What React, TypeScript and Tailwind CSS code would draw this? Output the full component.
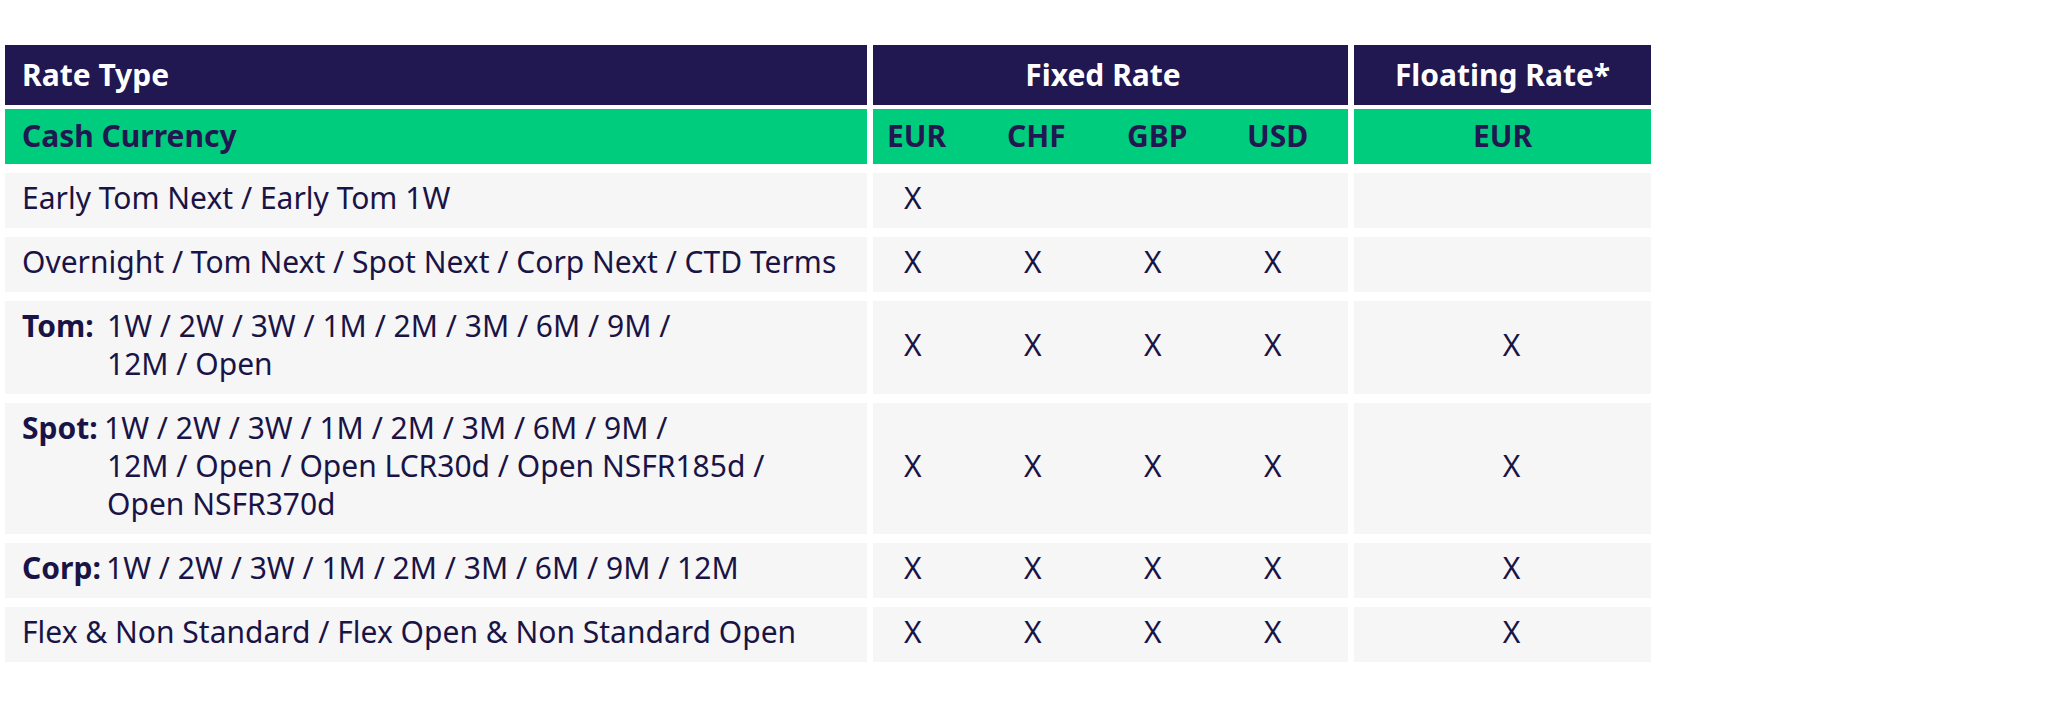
import React from "react";

const NAVY = "text-[#1a1446]";

type Row = {
  label?: string;
  labelW?: string;
  lines: string[];
  fixed: boolean[];
  floating: boolean;
  h: string;
};

const rows: Row[] = [
  { lines: ["Early Tom Next / Early Tom 1W"], fixed: [true, false, false, false], floating: false, h: "h-[55px]" },
  { lines: ["Overnight / Tom Next / Spot Next / Corp Next / CTD Terms"], fixed: [true, true, true, true], floating: false, h: "h-[55px]" },
  { label: "Tom:", labelW: "w-[85px]", lines: ["1W / 2W / 3W / 1M / 2M / 3M / 6M / 9M /", "12M / Open"], fixed: [true, true, true, true], floating: true, h: "h-[93px]" },
  { label: "Spot:", labelW: "w-[82px]", lines: ["1W / 2W / 3W / 1M / 2M / 3M / 6M / 9M /", "12M / Open / Open LCR30d / Open NSFR185d /", "Open NSFR370d"], fixed: [true, true, true, true], floating: true, h: "h-[131px]" },
  { label: "Corp:", labelW: "w-[84px]", lines: ["1W / 2W / 3W / 1M / 2M / 3M / 6M / 9M / 12M"], fixed: [true, true, true, true], floating: true, h: "h-[55px]" },
  { lines: ["Flex & Non Standard / Flex Open & Non Standard Open"], fixed: [true, true, true, true], floating: true, h: "h-[55px]" },
];

export default function App() {
  return (
    <div
      className={`w-[2048px] h-[702px] bg-white pt-[45px] pl-[5px] ${NAVY}`}
      style={{ fontFamily: '"Noto Sans", "Open Sans", sans-serif' }}
    >
      <div className="flex flex-col w-[1646px]">
        {/* Header row 1 */}
        <div className="grid grid-cols-[862px_475px_297px] gap-x-[6px] h-[60px] text-[30px] font-bold text-white">
          <div className="bg-[#211751] flex items-center pl-[17px] pb-[1px]">Rate Type</div>
          <div className="bg-[#211751] flex items-center justify-center pr-[15px] pb-[1px]">Fixed Rate</div>
          <div className="bg-[#211751] flex items-center justify-center pb-[1px]">Floating Rate*</div>
        </div>
        {/* Header row 2 */}
        <div className="grid grid-cols-[862px_475px_297px] gap-x-[6px] h-[55px] mt-[4px] text-[30px] font-bold text-[#211751]">
          <div className="bg-[#00cc7e] flex items-center pl-[17px] pb-[3px]">Cash Currency</div>
          <div className="bg-[#00cc7e] grid grid-cols-[120px_120px_120px_115px] items-center pb-[3px]">
            {["EUR", "CHF", "GBP", "USD"].map((c) => (
              <span key={c} className="pl-[14px]">{c}</span>
            ))}
          </div>
          <div className="bg-[#00cc7e] flex items-center justify-center pb-[3px]">EUR</div>
        </div>
        {/* Data rows */}
        <div className="flex flex-col gap-y-[9px] mt-[9px] text-[30px] leading-[38px]">
          {rows.map((r, i) => (
            <div key={i} className={`grid grid-cols-[862px_475px_297px] gap-x-[6px] ${r.h}`}>
              <div className="bg-[#f6f6f6] flex items-center pl-[17px] pb-[6px]">
                {r.label ? (
                  <div className="flex">
                    <span className={`font-bold shrink-0 ${r.labelW}`}>{r.label}</span>
                    <div className="flex flex-col">
                      {r.lines.map((l, j) => (
                        <span key={j} className={j > 0 && r.label === "Spot:" ? "pl-[3px]" : ""}>{l}</span>
                      ))}
                    </div>
                  </div>
                ) : (
                  <span>{r.lines[0]}</span>
                )}
              </div>
              <div className="bg-[#f6f6f6] grid grid-cols-[120px_120px_120px_115px] items-center pb-[6px]">
                {r.fixed.map((f, j) => (
                  <span key={j} className="pl-[31px]">{f ? "X" : ""}</span>
                ))}
              </div>
              <div className="bg-[#f6f6f6] flex items-center justify-center pl-[18px] pb-[6px]">
                {r.floating ? "X" : ""}
              </div>
            </div>
          ))}
        </div>
      </div>
    </div>
  );
}
